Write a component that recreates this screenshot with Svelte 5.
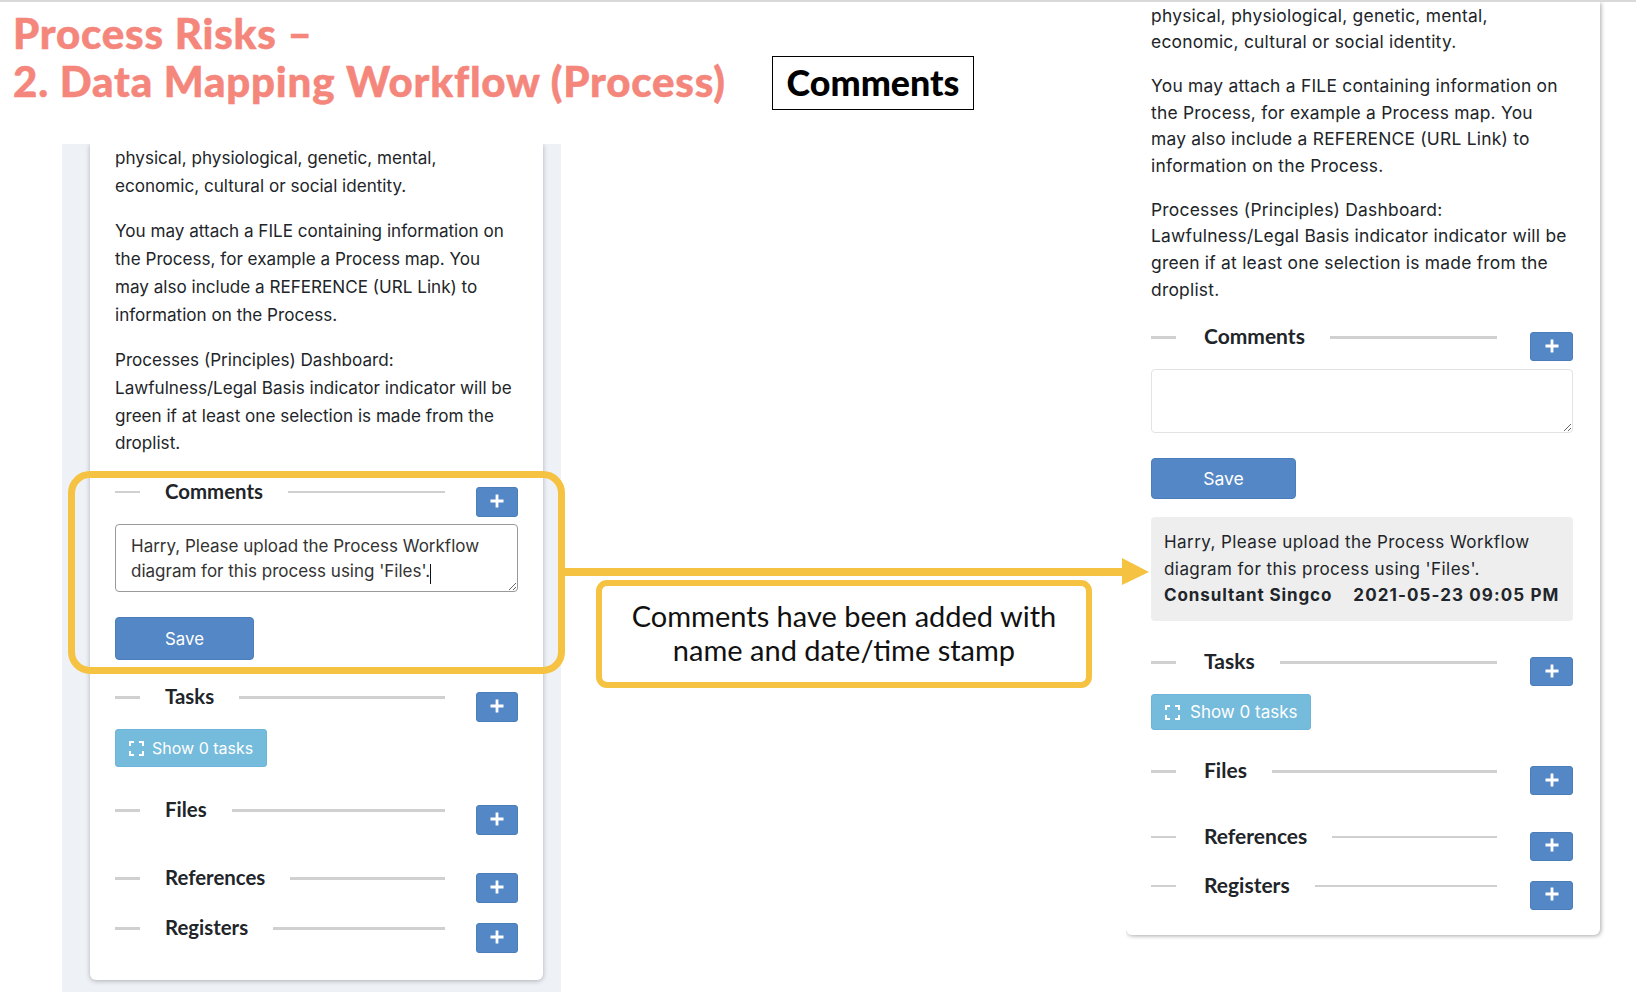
<script>
  const note = "Harry, Please upload the Process Workflow\ndiagram for this process using 'Files'."
</script>

{#snippet intro()}
  <p>physical, physiological, genetic, mental,<br />economic, cultural or social identity.</p>
  <p>You may attach a FILE containing information on<br />the Process, for example a Process map. You<br />may also include a REFERENCE (URL Link) to<br />information on the Process.</p>
  <p>Processes (Principles) Dashboard:<br />Lawfulness/Legal Basis indicator indicator will be<br />green if at least one selection is made from the<br />droplist.</p>
{/snippet}

{#snippet head(title, cls)}
  <div class="head {cls}">
    <span class="dash"></span>
    <span class="title">{title}</span>
    <span class="rule"></span>
    <button class="add" aria-label="Add {title}">
      <svg width="14" height="14" viewBox="0 0 14 14"><path d="M7 0.5v13M0.5 7h13" stroke="#fff" stroke-width="2.8" /></svg>
    </button>
  </div>
{/snippet}

{#snippet showTasks()}
  <button class="show">
    <svg width="15" height="15" viewBox="0 0 15 15" fill="none" stroke="#fff" stroke-width="2"><path d="M1 5V1h4M10 1h4v4M14 10v4h-4M5 14H1v-4" /></svg>
    Show 0 tasks
  </button>
{/snippet}

<div class="slide">
  <div class="col-left">
    <header>
      <h1>Process Risks –<br />2. Data Mapping Workflow (Process)</h1>
      <div class="tag">Comments</div>
    </header>
    <div class="panel">
      <section class="card small">
        {@render intro()}
        {@render head('Comments', 'h-comments')}
        <textarea class="entry" value={note}></textarea>
        <button class="save">Save</button>
        {@render head('Tasks', 'h-tasks')}
        {@render showTasks()}
        {@render head('Files', 'h-files')}
        {@render head('References', 'h-refs')}
        {@render head('Registers', 'h-regs')}
      </section>
    </div>
  </div>

  <div class="col-right">
    <section class="card large">
      {@render intro()}
      {@render head('Comments', 'h-comments')}
      <textarea class="entry"></textarea>
      <button class="save">Save</button>
      <div class="saved">
        Harry, Please upload the Process Workflow<br />diagram for this process using 'Files'.<br />
        <b class="who">Consultant Singco</b><b class="when">2021-05-23 09:05 PM</b>
      </div>
      {@render head('Tasks', 'h-tasks')}
      {@render showTasks()}
      {@render head('Files', 'h-files')}
      {@render head('References', 'h-refs')}
      {@render head('Registers', 'h-regs')}
    </section>
  </div>

  <div class="highlight"></div>
  <span class="caret"></span>
  <svg class="arrow" width="590" height="30" viewBox="0 0 590 30">
    <path d="M0 10h559V0l27 14-27 13V18H0z" fill="#f5c242" />
  </svg>
  <div class="callout">Comments have been added with<br />name and date/time stamp</div>
</div>

<style>
  :global(body) {
    background: #fff;
    font-family: Inter, "Liberation Sans", sans-serif;
    color: #212529;
  }
  .slide {
    position: relative;
    display: grid;
    grid-template-columns: 1126px 510px;
    height: 990px;
    border-top: 2px solid #d9d9d9;
    overflow: hidden;
  }
  header {
    display: flex;
    align-items: flex-start;
    height: 142px;
  }
  h1 {
    margin: 7px 0 0 13px;
    width: 759px;
    font: 900 42px/48px Lato, sans-serif;
    letter-spacing: 0.8px;
    -webkit-text-stroke: 0.5px #f4867c;
    color: #f4867c;
  }
  .tag {
    margin-top: 54px;
    width: 200px;
    height: 52px;
    border: 1px solid #000;
    font: 900 35.8px/52px Lato, sans-serif;
    color: #000;
    text-align: center;
  }
  .panel {
    margin-left: 62px;
    width: 499px;
    height: 848px;
    background: #eef2f7;
    padding-left: 28px;
    box-sizing: border-box;
  }
  .card {
    background: #fff;
    box-sizing: border-box;
    border-radius: 0 0 6px 6px;
  }
  .card p {
    margin: 0 0 17px;
  }
  .small {
    width: 453px;
    height: 836px;
    padding: 0 25px;
    font-size: 17.1px;
    line-height: 27.7px;
    box-shadow: 0 1px 5px rgba(0, 0, 0, 0.28);
    clip-path: inset(0 -8px -8px -8px);
  }
  .small p {
    margin-bottom: 18px;
  }
  .col-right {
    overflow: hidden;
    width: 479px;
  }
  .large {
    width: 474px;
    height: 933px;
    padding: 0.5px 27px 0 25px;
    font-size: 17.4px;
    letter-spacing: 0.24px;
    line-height: 26.7px;
    box-shadow: 1px 1px 4px rgba(0, 0, 0, 0.34);
    clip-path: inset(0 -8px -8px 0);
  }

  .head {
    display: flex;
    align-items: flex-start;
    color: #212529;
    letter-spacing: 0;
  }
  .dash {
    width: 25px;
    height: 2.5px;
    margin: 4px 25px 0 0;
    background: #d0d0d0;
  }
  .title {
    margin: -9px 25px 0 0;
    font: 700 20.4px/26px Lato, sans-serif;
    white-space: nowrap;
  }
  .rule {
    flex: 1;
    height: 2.5px;
    margin-top: 4px;
    background: #d0d0d0;
  }
  .add {
    display: flex;
    align-items: center;
    justify-content: center;
    margin-left: 31px;
    padding: 0 0 2px;
    width: 42px;
    height: 30px;
    background: #5487c5;
    border: 1px solid #4a7db9;
    border-radius: 3px;
  }
  .small .h-comments { margin-top: 29.5px; }
  .small .h-tasks { margin-top: 32px; }
  .small .h-files { margin-top: 38px; }
  .small .h-refs { margin-top: 38px; }
  .small .h-regs { margin-top: 20px; }
  .large .h-comments { margin-top: 28.5px; }
  .large .h-tasks { margin-top: 36.5px; }
  .large .h-files { margin-top: 36px; }
  .large .h-refs { margin-top: 36.5px; }
  .large .h-regs { margin-top: 20px; }
  .large .dash {
    margin-right: 28px;
  }
  .large .title {
    font-size: 21px;
  }
  .large .add {
    width: 43px;
    height: 29px;
    margin-left: 33px;
  }

  textarea.entry {
    display: block;
    width: 100%;
    box-sizing: border-box;
    margin: 7.5px 0 25px;
    border-radius: 4px;
    background: #fff;
    font-family: Inter, sans-serif;
    color: #333;
    outline: none;
  }
  .small .entry {
    height: 68px;
    padding: 9px 15px;
    border: 1px solid #999;
    font-size: 17px;
    line-height: 25px;
    overflow: hidden;
  }
  .large .entry {
    height: 64px;
    border: 1px solid #e3e3e3;
  }
  .save {
    display: block;
    background: #5487c5;
    color: #fff;
    border: 1px solid #4a7db9;
    border-radius: 4px;
    font-family: Inter, sans-serif;
    padding: 0;
  }
  .small .save {
    width: 139px;
    height: 43px;
    font-size: 16.8px;
  }
  .large .save {
    width: 145px;
    height: 41px;
    font-size: 17.6px;
  }
  .saved {
    margin-top: 18px;
    height: 104px;
    box-sizing: border-box;
    padding: 12.5px 13px;
    background: #eee;
    border-radius: 4px;
    font-size: 17px;
    letter-spacing: 0.43px;
    line-height: 26.5px;
    white-space: nowrap;
  }
  .who {
    margin-right: 21px;
    letter-spacing: 0.9px;
  }
  .when {
    letter-spacing: 1.1px;
  }
  .show {
    display: flex;
    align-items: center;
    gap: 8px;
    background: #75bbdc;
    color: #fff;
    border: 1px solid #6cb5d8;
    border-radius: 3px;
    font-family: Inter, sans-serif;
    padding: 0 0 0 13px;
  }
  .small .show {
    margin-top: 7px;
    width: 152px;
    height: 38px;
    font-size: 16px;
  }
  .large .show {
    margin-top: 8px;
    gap: 10px;
    width: 160px;
    height: 36px;
    font-size: 17px;
  }

  .highlight {
    position: absolute;
    left: 68px;
    top: 469px;
    width: 497px;
    height: 203px;
    box-sizing: border-box;
    border: 7px solid #f5c242;
    border-radius: 22px;
  }
  .caret {
    position: absolute;
    left: 430px;
    top: 562px;
    width: 1px;
    height: 20px;
    background: #111;
  }
  .arrow {
    position: absolute;
    left: 563px;
    top: 556px;
  }
  .callout {
    position: absolute;
    left: 596px;
    top: 578px;
    width: 496px;
    height: 108px;
    box-sizing: border-box;
    border: 6px solid #f5c242;
    border-radius: 11px;
    background: #fff;
    padding-top: 13px;
    font: 400 29px/34px Lato, sans-serif;
    color: #111;
    text-align: center;
  }
</style>
